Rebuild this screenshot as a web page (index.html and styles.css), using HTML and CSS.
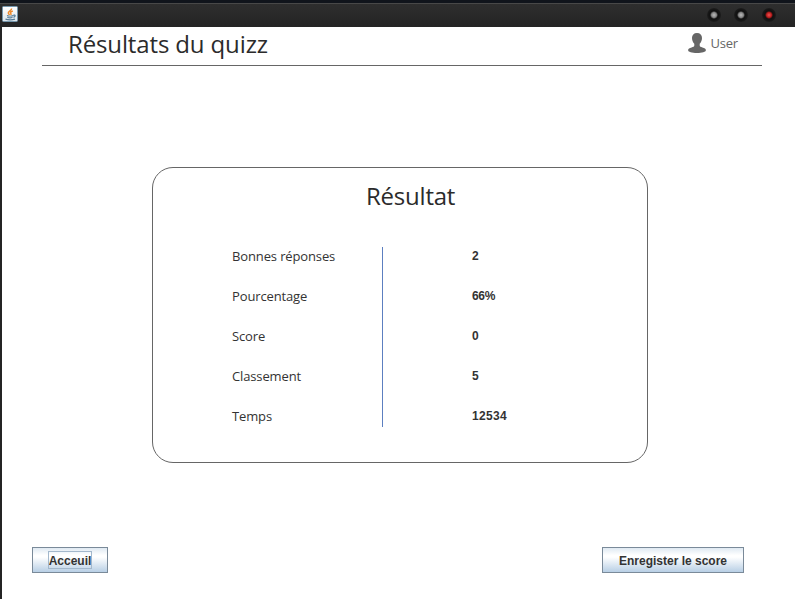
FILE: index.html
```html
<!DOCTYPE html>
<html lang="fr">
<head>
<meta charset="utf-8">
<title>Résultats du quizz</title>
<link rel="stylesheet" href="styles.css">
</head>
<body>
<div class="window">
  <div class="titlebar">
    <svg class="app-icon" width="16" height="16" viewBox="0 0 16 16">
      <defs><linearGradient id="tile" x1="0" y1="0" x2="0" y2="1"><stop offset="0" stop-color="#fff"/><stop offset="1" stop-color="#dce5eb"/></linearGradient></defs>
      <rect x=".5" y=".5" width="15" height="15" rx="1" fill="url(#tile)" stroke="#7597ad"/>
      <path d="M9.500 2.500C10 4.500 6 5 6.300 7c.1.9 1 1.300 1.200 2M10.800 5C8.500 5.800 8 6.500 8.800 7.500c.5.700.2 1.100-.2 1.500" fill="none" stroke="#ee8a2c" stroke-width="1.500"/>
      <path d="M5 9.500c1.500.7 5 .6 6.300 0M5.300 11.300c1.500.6 4 .6 5.200 0M3.500 13.200c2.500.7 7 .7 9.500 0M11.300 9.200c2.400-.8 2.400 1.500.2 2.100" fill="none" stroke="#547b97" stroke-width="1.200"/>
    </svg>
    <div class="controls">
      <span class="control"></span>
      <span class="control"></span>
      <span class="control close"></span>
    </div>
  </div>
  <main class="content">
    <header class="header">
      <h1>Résultats du quizz</h1>
      <div class="user">
        <svg width="18" height="20" viewBox="0 0 18 20"><path d="M9 0c3.200 0 5 2 5 5 0 2.300-1 4.500-2.300 5.800v1.700c0 1.200 1.100 1.500 2.700 1.900 2.200.5 3.500 1.300 3.500 2.900 0 1.700-3.900 2.700-8.900 2.700S.1 19 .1 17.300c0-1.600 1.300-2.400 3.500-2.900 1.600-.4 2.700-.7 2.700-1.900v-1.700C5 9.500 4 7.300 4 5 4 2 5.800 0 9 0z" fill="#666"/></svg>
        <span>User</span>
      </div>
    </header>
    <section class="card">
      <h2>Résultat</h2>
      <div class="results">
        <div class="labels"><span>Bonnes réponses</span><span>Pourcentage</span><span>Score</span><span>Classement</span><span>Temps</span></div>
        <div class="values"><span>2</span><span class="percent">66%</span><span>0</span><span>5</span><span>12534</span></div>
      </div>
    </section>
    <footer class="actions">
      <button class="button focused"><span>Acceuil</span></button>
      <button class="button save"><span>Enregister le score</span></button>
    </footer>
  </main>
</div>
</body>
</html>
```
FILE: styles.css
```css
* { box-sizing: border-box; }
body { margin: 0; color: #333; font-family: "Open Sans", sans-serif; overflow: hidden; }
h1, h2 { margin: 0; font-size: 24px; font-weight: 400; line-height: 34px; color: #2b2b2b; white-space: nowrap; letter-spacing: -.13px; }
.window { width: 795px; height: 599px; display: flex; flex-direction: column; }
.titlebar {
  height: 27px; padding: 6px 18px 0 2px; display: flex; justify-content: space-between;
  background: linear-gradient(#10141b 0 3px, #484848 3px 4px, #2e2e2e 4px, #242424 27px);
}
.app-icon { display: block; }
.controls { display: flex; height: 18px; margin-right: 1px; }
.control {
  width: 14px; height: 14px; margin: 2px 13px 0 0; border-radius: 50%;
  background: radial-gradient(circle at 50% 50%, #bbb 0, #858585 2.500px, #101010 4px, #151515 5.500px, #1d1d1d 7px);
}
.control:nth-child(2) { margin-right: 14px; }
.control.close { margin-right: 0; background: radial-gradient(circle at 50% 50%, #ed5555 0, #b91d1d 2.500px, #101010 4px, #151515 5.500px, #1d1d1d 7px); }
.content { flex: 1; display: flex; flex-direction: column; border-left: 2px solid #242424; background: #fff; }
.header {
  width: 720px; height: 39px; margin-left: 40px; padding: 0 24px 0 26px;
  display: flex; justify-content: space-between; border-bottom: 1px solid #666;
}
.user { display: flex; gap: 5px; padding-top: 6px; font-size: 13px; line-height: 21px; color: #666; letter-spacing: -.2px; }
.card { width: 496px; height: 296px; margin: 101px 0 0 150px; padding-top: 11px; border: 1px solid #666; border-radius: 21px; }
.card h2 { padding-left: 213px; letter-spacing: -.22px; }
.results { display: flex; height: 180px; margin: 34px 0 0 79px; font-size: 13px; }
.labels, .values { display: flex; flex-direction: column; gap: 20px; line-height: 20px; }
.labels { width: 151px; border-right: 1px solid #5c7fc0; line-height: 18px; gap: 22px; letter-spacing: -.13px; }
.values { padding-left: 89px; font: bold 12px/18px "Liberation Sans", sans-serif; gap: 22px; letter-spacing: .33px; }
.percent { letter-spacing: -.3px; }
.actions { display: flex; justify-content: space-between; margin-top: 84px; padding: 0 51px 0 30px; }
.button {
  width: 76px; height: 26px; padding: 0; display: flex; align-items: center; justify-content: center;
  border: 1px solid #7a8a99; color: #333; font: bold 12px/16px "Liberation Sans", sans-serif;
  background: linear-gradient(#dfe9f2, #fff 30%, #fff 38%, #b8cfe5);
}
.button span { height: 16px; line-height: 18px; }
.button.save { width: 142px; }
.focused span { outline: 1px solid #a3b8cc; }
```
